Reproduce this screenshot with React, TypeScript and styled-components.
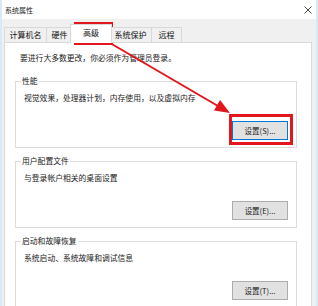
import styled, { createGlobalStyle } from 'styled-components'

const GlobalStyle = createGlobalStyle`
  html, body {
    margin: 0;
    padding: 0;
    background: #fff;
  }
  body {
    font-family: "Noto Sans CJK SC", "Noto Sans", sans-serif;
    color: #1a1a1a;
  }
`

const Stage = styled.div`
  position: relative;
  width: 318px;
  height: 306px;
  overflow: hidden;
`

const Window = styled.div`
  width: 318px;
  height: 306px;
  box-sizing: border-box;
  background: #f0f0f0;
  border-left: 2px solid #d8eaf7;
  border-right: 2px solid #d4edf2;
  display: flex;
  flex-direction: column;
`

const TitleBar = styled.div`
  height: 19px;
  flex: none;
  background: #fff;
  display: flex;
  align-items: center;
  justify-content: space-between;
  padding: 0 4px 0 3px;
  font-size: 7px;
  color: #222;
`

const TabRow = styled.div`
  height: 23px;
  flex: none;
  display: flex;
  align-items: flex-end;
  padding-left: 2px;
  position: relative;
  z-index: 1;
`

const Tab = styled.div<{ $w: number; $active?: boolean }>`
  box-sizing: border-box;
  width: ${(p) => p.$w}px;
  height: ${(p) => (p.$active ? 19 : 16)}px;
  margin: ${(p) => (p.$active ? '0 -2px -1px -3px' : '0 0 -1px -1px')};
  &:first-child {
    margin-left: 0;
  }
  border: 1px solid #d9d9d9;
  border-bottom: ${(p) => (p.$active ? 'none' : '1px solid #d9d9d9')};
  background: ${(p) => (p.$active ? '#fff' : '#f0f0f0')};
  position: relative;
  z-index: ${(p) => (p.$active ? 2 : 1)};
  display: flex;
  align-items: center;
  justify-content: center;
  font-size: 8px;
  line-height: 10px;
  padding-bottom: ${(p) => (p.$active ? 2 : 0)}px;
  color: #111;
`

const Panel = styled.div`
  flex: 1;
  margin: 0 4px 0 2px;
  background: #fff;
  border: 1px solid #d9d9d9;
  border-bottom: none;
  padding: 9px 14px 0 10px;
  font-size: 7.8px;
`

const Intro = styled.p`
  margin: 0;
  padding-left: 5px;
  line-height: 12px;
  white-space: nowrap;
`

const Group = styled.fieldset`
  margin: 8px 0 0;
  &:first-of-type {
    margin-top: 12px;
  }
  min-width: 0;
  border: 1px solid #dcdcdc;
  padding: 6px 8px 7px 5px;
`

const Legend = styled.legend`
  padding: 0 1px;
  line-height: 10px;
  font-size: 7.8px;
  color: #1a1a1a;
`

const Desc = styled.p`
  margin: 0;
  padding-left: 3px;
  line-height: 12px;
  white-space: nowrap;
`

const ButtonRow = styled.div`
  display: flex;
  justify-content: flex-end;
  margin-top: 17px;
`

const Button = styled.button<{ $default?: boolean }>`
  box-sizing: border-box;
  width: 56px;
  height: 19px;
  padding: 0;
  background: #e1e1e1;
  border: 1px solid ${(p) => (p.$default ? '#0078d7' : '#adadad')};
  font-family: inherit;
  font-size: 7.5px;
  color: #1a1a1a;
`

const Marker = styled.div<{ $x: number; $y: number; $w: number; $h: number }>`
  position: absolute;
  left: ${(p) => p.$x}px;
  top: ${(p) => p.$y}px;
  width: ${(p) => p.$w}px;
  height: ${(p) => p.$h}px;
  box-sizing: border-box;
  border: 3px solid #e2161d;
  pointer-events: none;
`

const Overlay = styled.svg`
  position: absolute;
  left: 0;
  top: 0;
  pointer-events: none;
`

const CloseIcon = () => (
  <svg width="8" height="8" viewBox="0 0 8 8">
    <path d="M0.5 0.5 L7.5 7.5 M7.5 0.5 L0.5 7.5" stroke="#333" strokeWidth="0.9" />
  </svg>
)

const tabs = [
  { label: '计算机名', w: 43 },
  { label: '硬件', w: 27 },
  { label: '高级', w: 42, active: true },
  { label: '系统保护', w: 43 },
  { label: '远程', w: 31 },
]

const groups = [
  { title: '性能', desc: '视觉效果，处理器计划，内存使用，以及虚拟内存', btn: '设置(S)...', def: true },
  { title: '用户配置文件', desc: '与登录帐户相关的桌面设置', btn: '设置(E)...' },
  { title: '启动和故障恢复', desc: '系统启动、系统故障和调试信息', btn: '设置(T)...' },
]

export default function App() {
  return (
    <Stage>
      <GlobalStyle />
      <Window>
        <TitleBar>
          <span>系统属性</span>
          <CloseIcon />
        </TitleBar>
        <TabRow>
          {tabs.map((t) => (
            <Tab key={t.label} $w={t.w} $active={t.active}>
              {t.label}
            </Tab>
          ))}
        </TabRow>
        <Panel>
          <Intro>要进行大多数更改，你必须作为管理员登录。</Intro>
          {groups.map((g) => (
            <Group key={g.title}>
              <Legend>{g.title}</Legend>
              <Desc>{g.desc}</Desc>
              <ButtonRow>
                <Button $default={g.def}>{g.btn}</Button>
              </ButtonRow>
            </Group>
          ))}
        </Panel>
      </Window>

      <Marker $x={74} $y={22} $w={39} $h={23} />
      <Marker $x={229} $y={114} $w={64} $h={31} />
      <Overlay width="318" height="306">
        <line x1="110" y1="43" x2="218" y2="106" stroke="#e2161d" strokeWidth="2" />
        <polygon points="230,113 214,110.5 220,100" fill="#e2161d" />
      </Overlay>
    </Stage>
  )
}
